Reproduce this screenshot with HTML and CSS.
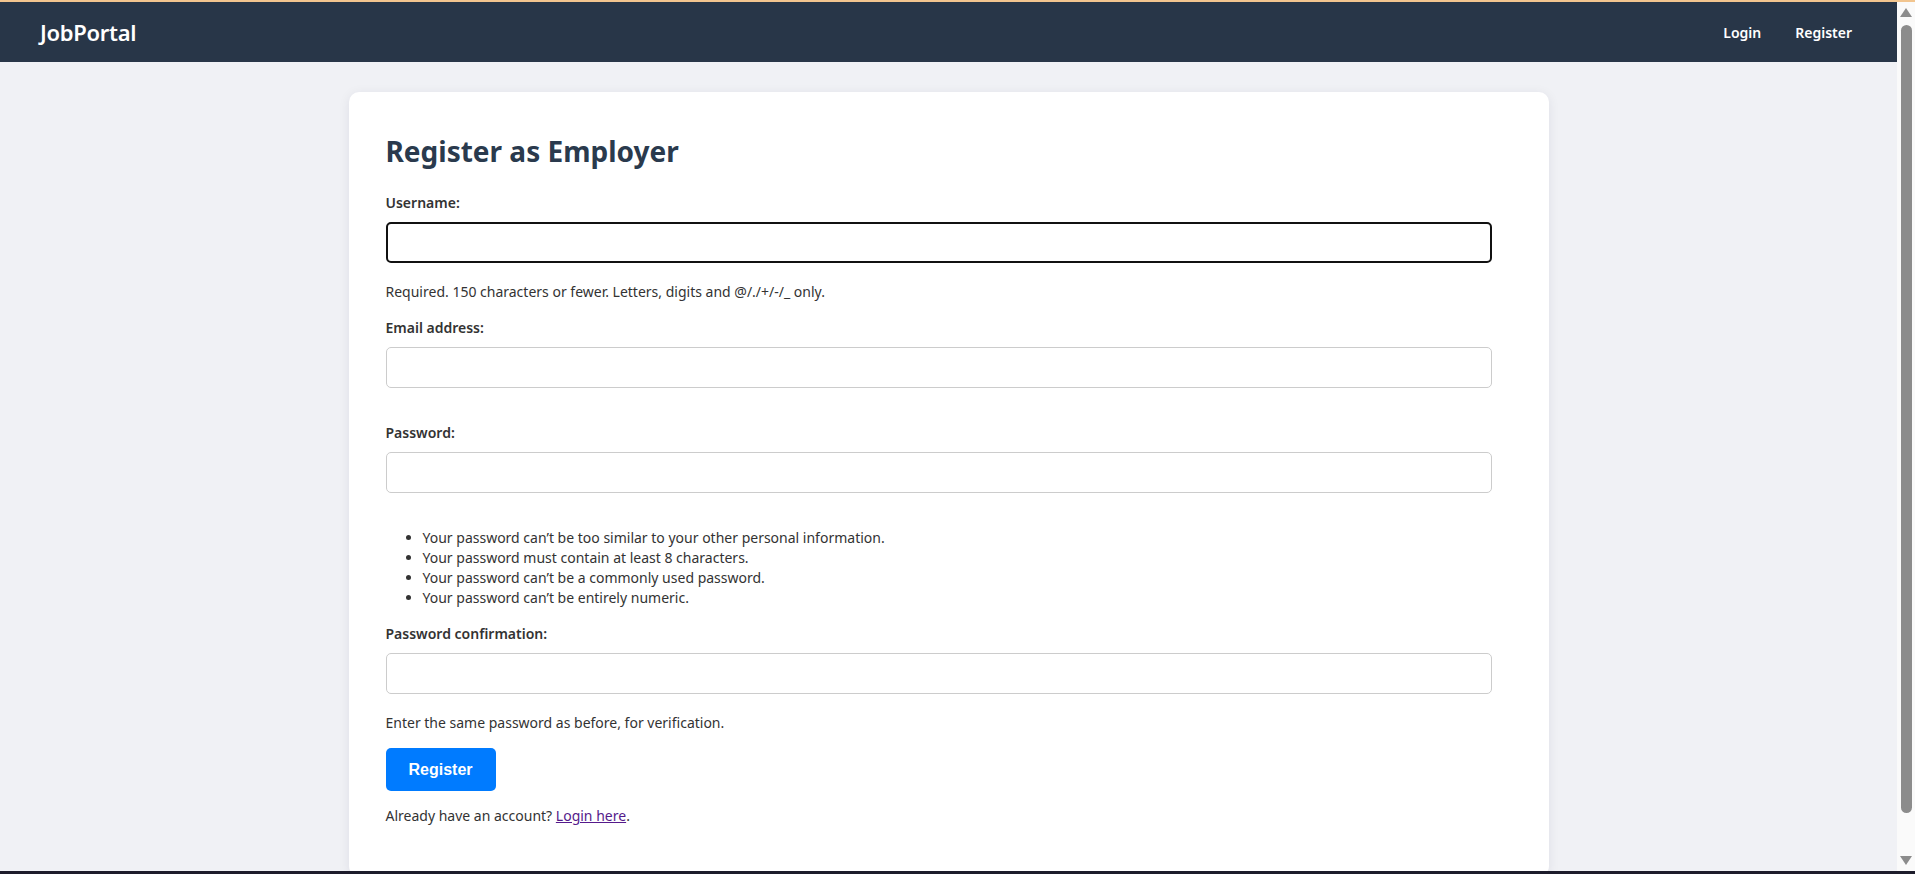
FILE: index.html
```html
<!DOCTYPE html>
<html lang="en">
<head>
<meta charset="utf-8">
<title>Register as Employer - JobPortal</title>
<link rel="stylesheet" href="styles.css">
</head>
<body>
<div class="top-line"></div>
<div class="viewport">
  <div class="page">
    <nav class="navbar">
      <a class="brand" href="#">JobPortal</a>
      <div class="nav-links">
        <a href="#">Login</a>
        <a href="#">Register</a>
      </div>
    </nav>
    <main class="card">
      <h2 class="title">Register as Employer</h2>
      <form class="form">
        <div class="field">
          <label for="id_username">Username:</label>
          <input type="text" id="id_username" class="input input-focus">
          <div class="help">Required. 150 characters or fewer. Letters, digits and @/./+/-/_ only.</div>
        </div>
        <div class="field">
          <label for="id_email">Email address:</label>
          <input type="email" id="id_email" class="input">
        </div>
        <div class="field">
          <label for="id_password1">Password:</label>
          <input type="password" id="id_password1" class="input">
          <ul class="help-list">
            <li>Your password can’t be too similar to your other personal information.</li>
            <li>Your password must contain at least 8 characters.</li>
            <li>Your password can’t be a commonly used password.</li>
            <li>Your password can’t be entirely numeric.</li>
          </ul>
        </div>
        <div class="field">
          <label for="id_password2">Password confirmation:</label>
          <input type="password" id="id_password2" class="input">
          <div class="help">Enter the same password as before, for verification.</div>
        </div>
        <button type="button" class="btn">Register</button>
      </form>
      <p class="already">Already have an account? <a href="#">Login here</a>.</p>
    </main>
  </div>
  <div class="scrollbar" aria-hidden="true">
    <span class="arrow-up"></span>
    <span class="thumb"></span>
    <span class="arrow-down"></span>
  </div>
</div>
<div class="bottom-line"></div>
</body>
</html>
```
FILE: styles.css
```css
* { box-sizing: border-box; }
html, body { margin: 0; padding: 0; }
body {
  height: 100vh;
  overflow: hidden;
  display: flex;
  flex-direction: column;
  background: #f0f1f5;
  font-family: "Noto Sans", "Open Sans", sans-serif;
  color: #333;
  font-size: 14px;
}
.top-line { height: 2px; flex: none; background: #f2c58f; }
.bottom-line { height: 3px; flex: none; background: #1d1c2b; }
.viewport { flex: 1; display: flex; min-height: 0; }
.page { flex: 1; min-width: 0; overflow: hidden; }
.scrollbar {
  width: 18px;
  flex: none;
  background: #fafafa;
  display: flex;
  flex-direction: column;
  align-items: center;
  padding: 6px 0 6px;
}
.arrow-up {
  width: 0; height: 0;
  border-left: 6px solid transparent;
  border-right: 6px solid transparent;
  border-bottom: 9px solid #8c8c8c;
}
.thumb {
  width: 11px;
  height: 788px;
  margin-top: 8px;
  border-radius: 6px;
  background: #8c8c8c;
}
.arrow-down {
  margin-top: auto;
  width: 0; height: 0;
  border-left: 6px solid transparent;
  border-right: 6px solid transparent;
  border-top: 9px solid #8c8c8c;
}
.navbar {
  height: 60px;
  background: #283648;
  display: flex;
  align-items: center;
  justify-content: space-between;
  padding: 0 45px 0 40px;
}
.brand {
  color: #fff;
  text-decoration: none;
  font-size: 22px;
  font-weight: 600;
  letter-spacing: -0.3px;
}
.nav-links { display: flex; gap: 34px; }
.nav-links a {
  color: #fff;
  text-decoration: none;
  font-size: 14px;
  font-weight: 600;
}
.card {
  width: 1200px;
  margin: 30px auto 50px;
  background: #fff;
  border-radius: 10px;
  box-shadow: 0 2px 12px rgba(20, 30, 60, 0.08);
  padding: 42px 57px 50px 37px;
}
.title {
  margin: 0 0 25px;
  font-size: 28px;
  line-height: 34px;
  font-weight: 700;
  color: #2a3a4d;
}
.form { display: block; }
.field { display: flow-root; margin-bottom: 16px; }
.field label {
  display: block;
  font-weight: 600;
  line-height: 20px;
  margin-bottom: 9px;
  color: #333;
}
.input {
  display: block;
  width: 100%;
  height: 41px;
  border: 1px solid #ccc;
  border-radius: 5px;
  padding: 10px;
  font: inherit;
  margin-bottom: 19px;
  background: #fff;
}
.input-focus { border: 2px solid #111; }
.help { line-height: 20px; color: #333; }
.help-list {
  margin: 35px 0 0;
  padding-left: 37px;
  line-height: 20px;
}
.btn {
  display: block;
  background: #007bff;
  color: #fff;
  border: none;
  border-radius: 5px;
  font-family: "Liberation Sans", Arial, sans-serif;
  font-size: 16px;
  font-weight: 700;
  line-height: 19px;
  padding: 12px 23px;
  margin-top: -1px;
}
.already {
  margin: 15px 0 0;
  line-height: 20px;
}
.already a { color: #551a8b; }
```
